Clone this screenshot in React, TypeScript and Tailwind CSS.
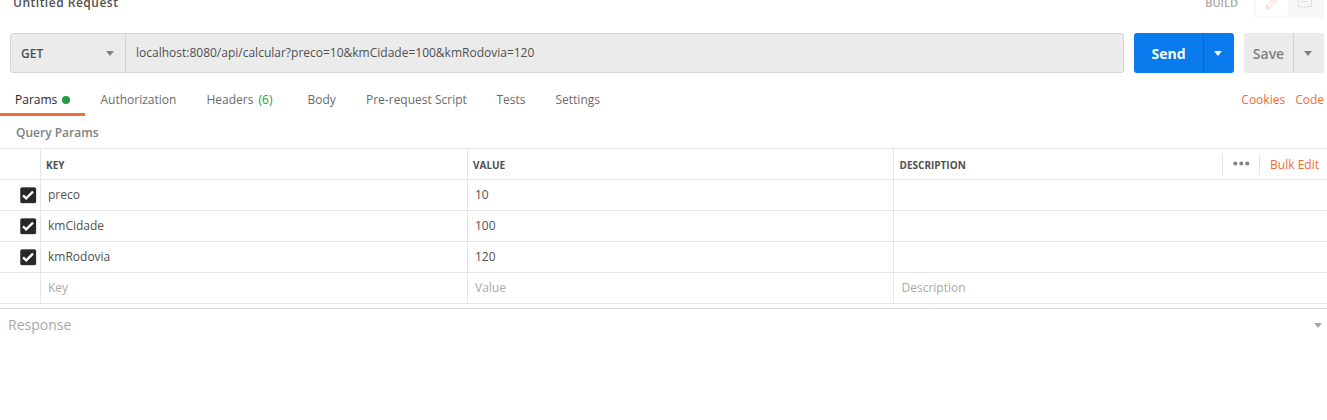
import React from "react";

function Caret({ className = "" }: { className?: string }) {
  return (
    <svg className={className} width="8" height="5" viewBox="0 0 8 5" fill="currentColor">
      <path d="M0 0h8L4 5z" />
    </svg>
  );
}

function Check() {
  return (
    <svg className="block" width="17" height="17" viewBox="0 0 17 17">
      <rect x="0" y="0" width="16.4" height="16.4" rx="2.2" fill="#282828" fillOpacity="0.35" />
      <rect x="0.4" y="0.4" width="15.6" height="15.6" rx="1.6" fill="#282828" />
      <path d="M3 8.3l3.2 3.1L13 4.6" fill="none" stroke="#fff" strokeWidth="2.3" />
    </svg>
  );
}

const rows = [
  { key: "preco", value: "10" },
  { key: "kmCidade", value: "100" },
  { key: "kmRodovia", value: "120" },
];

const grid = "grid grid-cols-[40px_427px_426px_1fr] h-[31px] border-b border-[#e6e6e6]";
const cell = "flex items-center border-l border-[#e6e6e6] pl-[7px]";
const heading = "flex items-center border-l border-[#e6e6e6] pl-[5px] pt-px text-[10px] font-bold";

export default function App() {
  return (
    <div className="h-[420px] w-[1327px] overflow-hidden bg-white font-['Open_Sans',sans-serif] text-[12px] leading-4 text-[#505050]">
      <header className="flex h-[33px] items-start justify-between pl-[13px] pr-[3px]">
        <h1 className="-mt-[5px] text-[12px] font-semibold tracking-[0.5px]">Untitled Request</h1>
        <div className="flex items-start">
          <span className="-mt-[5px] mr-4 text-[11px] font-semibold tracking-[0px] text-[#a9a9a9]">BUILD</span>
          <div className="flex h-[18px] w-[70px] rounded-b-[3px] bg-[#f7f7f7] px-[2px] pb-[2px]">
            <div className="flex w-8 justify-center rounded-b-[3px] bg-white">
              <svg width="14" height="10" viewBox="0 0 14 10" fill="none" stroke="#fad0c2" strokeWidth="1">
                <path d="M9.5 -2L2 5.5L1.2 8.7L4.4 7.9L12.5 -0.2M2 5.5L4.4 7.9M8 0L10 2" />
              </svg>
            </div>
            <div className="flex flex-1 justify-center">
              <svg width="15" height="10" viewBox="0 0 15 10" fill="none" stroke="#dedede" strokeWidth="1">
                <path d="M.5 -2V6.5H4L6 8.5L8 6.5H13.5V-2M3 1.5H9" />
              </svg>
            </div>
          </div>
        </div>
      </header>

      <div className="flex h-10 pl-[10px] pr-[3px]">
        <div className="flex w-[1114px] rounded-[3px] border border-[#d4d4d4] bg-[#ebebeb]">
          <button className="flex w-[115px] items-center justify-between border-r border-[#d4d4d4] pl-[10px] pr-[11px] text-[12px] font-semibold">
            <span className="pt-[2px]">GET</span>
            <Caret className="text-[#808080]" />
          </button>
          <div className="flex items-center pb-px pl-[10px]">localhost:8080/api/calcular?preco=10&amp;kmCidade=100&amp;kmRodovia=120</div>
        </div>
        <div className="ml-[10px] flex w-[100px] overflow-hidden rounded-[3px] bg-[#097bed] text-white">
          <button className="flex w-[70px] items-center justify-center border-r border-[#0869c9] pt-[2px] text-[14px] font-bold">Send</button>
          <button className="flex flex-1 items-center justify-center pr-[2px]"><Caret /></button>
        </div>
        <div className="ml-[10px] flex w-20 overflow-hidden rounded-[3px] bg-[#ebebeb] text-[#808080]">
          <button className="flex w-[50px] items-center justify-center border-r border-[#d4d4d4] pt-[2px] text-[14px] font-semibold">Save</button>
          <button className="flex flex-1 items-center justify-center pr-[2px]"><Caret /></button>
        </div>
      </div>

      <nav className="flex h-[43px] items-stretch text-[#6b6b6b]">
        <div className="flex w-[85px] items-start border-b-[3px] border-[#f26b3a] pl-[15px] pt-[19px] text-[#282828]">
          <span>Params</span>
          <i className="ml-[5px] mt-1 size-2 rounded-full bg-[#249c47]" />
        </div>
        <div className="w-[121.5px] pl-[15.5px] pt-[19px]">Authorization</div>
        <div className="w-[101px] pt-[19px]">Headers <span className="ml-[2px] text-[#249c47]">(6)</span></div>
        <div className="w-[58.5px] pt-[19px]">Body</div>
        <div className="w-[130.5px] pt-[19px]">Pre-request Script</div>
        <div className="w-[59px] pt-[19px]">Tests</div>
        <div className="pt-[19px]">Settings</div>
        <div className="ml-auto flex gap-[10px] pr-[3px] pt-[19px] text-[#f26b3a]">
          <a>Cookies</a>
          <a>Code</a>
        </div>
      </nav>

      <h2 className="h-8 pl-4 pt-[9px] text-[12px] font-semibold text-[#808080]">Query Params</h2>

      <section className="border-t border-[#e6e6e6]">
        <div className={grid}>
          <div />
          <div className={heading}>KEY</div>
          <div className={heading}>VALUE</div>
          <div className={heading}>
            <span className="pl-[0.5px]">DESCRIPTION</span>
            <div className="ml-auto flex items-center text-[12px] font-normal">
              <div className="flex h-[22px] w-[37px] items-center border-l border-[#e6e6e6] pl-[10px]">
                <svg width="17" height="5" viewBox="0 0 17 5" fill="#808080" className="-mt-[3px]">
                  <circle cx="2.3" cy="2.5" r="2" /><circle cx="8.3" cy="2.5" r="2" /><circle cx="14.3" cy="2.5" r="2" />
                </svg>
              </div>
              <a className="flex h-5 items-center border-l border-[#e6e6e6] pl-[10px] pr-2 pt-px text-[#f26b3a]">Bulk Edit</a>
            </div>
          </div>
        </div>
        {rows.map((row) => (
          <div key={row.key} className={grid}>
            <div className="pl-[19.6px] pt-[6.6px]"><Check /></div>
            <div className={cell}>{row.key}</div>
            <div className={cell}>{row.value}</div>
            <div className={cell} />
          </div>
        ))}
        <div className={`${grid} text-[#a9a9a9]`}>
          <div />
          <div className={cell}>Key</div>
          <div className={cell}>Value</div>
          <div className={cell}><span className="pl-[0.5px]">Description</span></div>
        </div>
      </section>

      <footer className="mt-1 flex h-[33px] items-center justify-between border-t border-[#dcdcdc] pl-2 pr-[5px] text-[14px] text-[#a9a9a9]">
        <span>Response</span>
        <Caret />
      </footer>
    </div>
  );
}
